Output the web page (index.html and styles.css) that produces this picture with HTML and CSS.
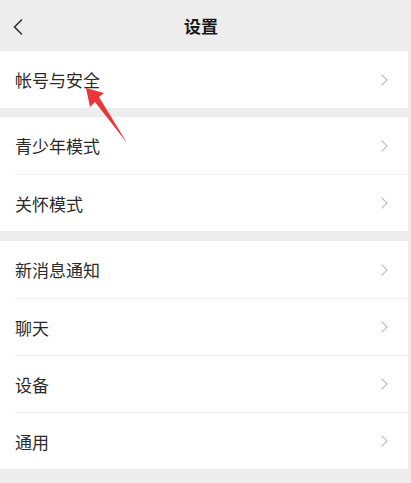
FILE: index.html
```html
<!DOCTYPE html>
<html lang="zh-CN">
<head>
    <meta charset="UTF-8">
    <meta name="viewport" content="width=device-width, initial-scale=1.0">
    <title>设置</title>
    <link rel="stylesheet" href="styles.css">
</head>
<body>
    <div class="page">
        <header class="topbar">
            <svg class="back" width="12" height="18" viewBox="0 0 12 18">
                <path d="M10 1.5 L2.5 9 L10 16.5" fill="none" stroke="#333" stroke-width="1.6"/>
            </svg>
            <h1>设置</h1>
        </header>

        <div class="group">
            <div class="row">帐号与安全<span class="arrow"></span></div>
        </div>

        <div class="group">
            <div class="row">青少年模式<span class="arrow"></span></div>
            <div class="row">关怀模式<span class="arrow"></span></div>
        </div>

        <div class="group">
            <div class="row">新消息通知<span class="arrow"></span></div>
            <div class="row">聊天<span class="arrow"></span></div>
            <div class="row">设备<span class="arrow"></span></div>
            <div class="row">通用<span class="arrow"></span></div>
        </div>

        <!-- red annotation arrow drawn on the screenshot -->
        <svg class="pointer" width="60" height="70" viewBox="0 0 60 70">
            <polygon points="6,8 10,27 15,22 47,63 19,17 24,13" fill="#e8363b"/>
        </svg>
    </div>
</body>
</html>
```

FILE: styles.css
```css
body {
    margin: 0;
    background-color: #ededed;
    font-family: "Noto Sans CJK SC", "Noto Sans", sans-serif;
    color: #2a2a2a;
}
.page {
    position: relative;
    width: 408px;
    height: 483px;
    background-color: #ededed;
}
.topbar {
    height: 51px;
    display: flex;
    align-items: center;
    justify-content: center;
    padding-right: 6px;
    position: relative;
}
.topbar h1 {
    margin: 0;
    font-size: 17px;
    font-weight: 600;
    color: #1a1a1a;
}
.back {
    position: absolute;
    left: 12px;
    top: 18px;
}
.group {
    background-color: #fff;
    margin-bottom: 9px;
}
.group + .group {
    margin-bottom: 10px;
}
.row {
    height: 57px;
    display: flex;
    align-items: center;
    justify-content: space-between;
    padding: 0 22px 0 15px;
    font-size: 17px;
    position: relative;
}
.row + .row {
    border-top: 1px solid #f1f1f1;
    margin-left: 15px;
    padding-left: 0;
    height: 56px;
}
.arrow {
    width: 7px;
    height: 7px;
    border-top: 1.4px solid #b8b8b8;
    border-right: 1.4px solid #b8b8b8;
    transform: rotate(45deg);
}
.pointer {
    position: absolute;
    left: 80px;
    top: 80px;
}
```
